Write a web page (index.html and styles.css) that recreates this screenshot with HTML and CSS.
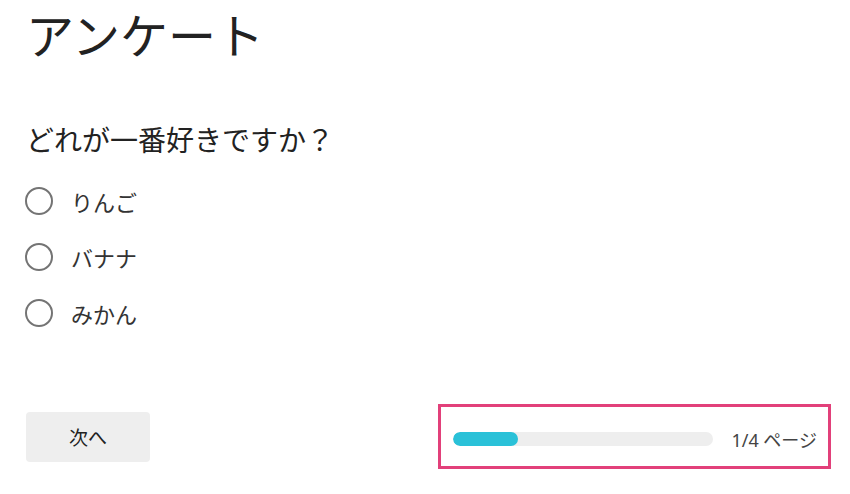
FILE: index.html
```html
<!DOCTYPE html>
<html lang="ja">
<head>
    <meta charset="UTF-8">
    <meta name="viewport" content="width=device-width, initial-scale=1.0">
    <title>アンケート</title>
    <link rel="stylesheet" href="styles.css">
</head>
<body>

    <div class="survey">
        <h1 class="survey-title">アンケート</h1>

        <form class="question">
            <h2 class="question-text">どれが一番好きですか？</h2>

            <label class="choice">
                <input type="radio" name="fruit" value="apple">
                <span class="choice-mark"></span>
                <span class="choice-label">りんご</span>
            </label>
            <label class="choice">
                <input type="radio" name="fruit" value="banana">
                <span class="choice-mark"></span>
                <span class="choice-label">バナナ</span>
            </label>
            <label class="choice">
                <input type="radio" name="fruit" value="orange">
                <span class="choice-mark"></span>
                <span class="choice-label">みかん</span>
            </label>
        </form>

        <div class="survey-footer">
            <button type="button" class="next-button">次へ</button>

            <!-- progress -->
            <div class="progress">
                <div class="progress-track">
                    <div class="progress-fill" style="width: 25%"></div>
                </div>
                <span class="progress-text">1/4 ページ</span>
            </div>
        </div>
    </div>

</body>
</html>
```

FILE: styles.css
```css
body {
    margin: 0;
    font-family: "Noto Sans", "Noto Sans CJK JP", sans-serif;
    color: #222;
    background: #fff;
}
.survey {
    display: flex;
    flex-direction: column;
    height: 494px;
    padding: 0 19px 0 26px;
    box-sizing: border-box;
}
.survey-title {
    margin: 4px 0 0 0;
    font-size: 48px;
    font-weight: normal;
    line-height: 64px;
}
.question {
    display: flex;
    flex-direction: column;
    margin-top: 52px;
}
.question-text {
    margin: 0 0 13px 0;
    font-size: 28px;
    font-weight: normal;
    line-height: 40px;
}
.choice {
    display: flex;
    align-items: center;
    height: 56px;
    cursor: pointer;
}
.choice input {
    display: none;
}
.choice-mark {
    width: 24px;
    height: 24px;
    border: 2px solid #747474;
    border-radius: 50%;
    margin-left: -1px;
}
.choice-label {
    margin-left: 18px;
    font-size: 22px;
    color: #333;
}
.survey-footer {
    display: flex;
    justify-content: space-between;
    align-items: center;
    margin-top: auto;
    margin-bottom: 25px;
}
.next-button {
    width: 124px;
    height: 50px;
    border: none;
    border-radius: 4px;
    background-color: #eeeeee;
    font-family: inherit;
    font-size: 19px;
    color: #222;
    cursor: pointer;
}
.progress {
    display: flex;
    align-items: center;
    width: 393px;
    height: 65px;
    padding: 4px 11px 0 12px;
    border: 3px solid #e2407a;
    box-sizing: border-box;
}
.progress-track {
    width: 260px;
    height: 14px;
    border-radius: 7px;
    background-color: #eeeeee;
    overflow: hidden;
}
.progress-fill {
    height: 100%;
    border-radius: 7px;
    background-color: #2ac1d8;
}
.progress-text {
    margin-left: auto;
    font-size: 18px;
    color: #444;
}
```
